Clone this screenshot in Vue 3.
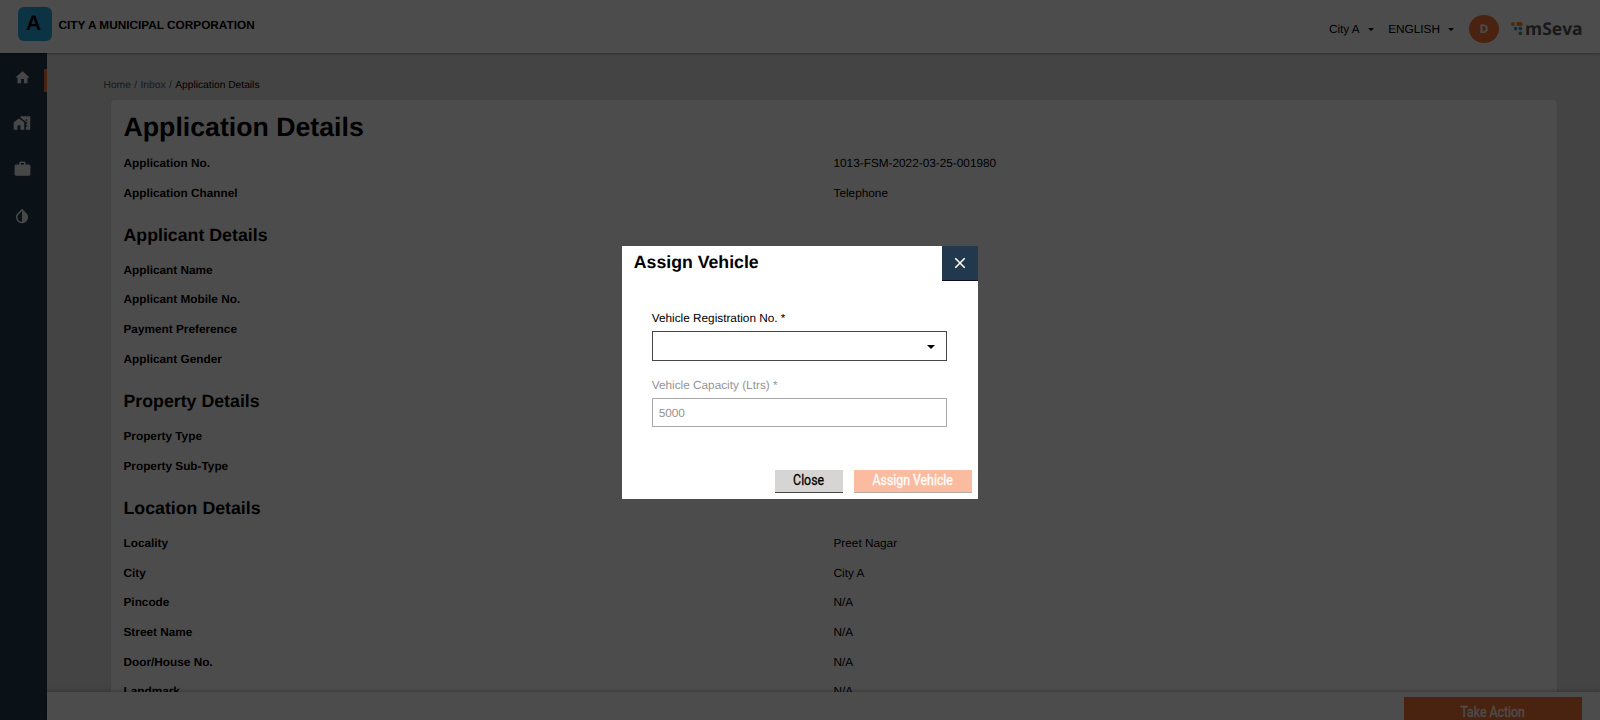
<script setup>
const sections = [
  { title: '', rows: [['Application No.', '1013-FSM-2022-03-25-001980'], ['Application Channel', 'Telephone']] },
  { title: 'Applicant Details', rows: [['Applicant Name', ''], ['Applicant Mobile No.', ''], ['Payment Preference', ''], ['Applicant Gender', '']] },
  { title: 'Property Details', rows: [['Property Type', ''], ['Property Sub-Type', '']] },
  { title: 'Location Details', rows: [['Locality', 'Preet Nagar'], ['City', 'City A'], ['Pincode', 'N/A'], ['Street Name', 'N/A'], ['Door/House No.', 'N/A'], ['Landmark', 'N/A']] }
]
</script>

<template>
  <div class="page">
    <header class="top">
      <div class="logo">A</div>
      <div class="corp">CITY A MUNICIPAL CORPORATION</div>
      <div class="tools">
        <span class="city">City A</span><i class="caret"></i>
        <span class="lang">ENGLISH</span><i class="caret"></i>
        <div class="avatar">D</div>
        <svg class="dots" width="12" height="14" viewBox="0 0 12 14">
          <g fill="#f58a1f"><circle cx="2" cy="2" r="1.9" /><rect x="5.400" y=".1" width="6.200" height="3.800" rx="1.600" /></g>
          <g fill="#1f8fe0"><circle cx="4.600" cy="6.600" r="1.800" /><circle cx="9.400" cy="6.600" r="1.800" /></g>
          <circle cx="9.400" cy="11.400" r="1.800" fill="#2faa4a" />
        </svg>
        <span class="brand">mSeva</span>
      </div>
    </header>
    <div class="body">
      <nav class="side">
        <div class="item active"><svg width="17" height="17" viewBox="0 0 24 24"><path d="M10 20v-6h4v6h5v-8h3L12 3 2 12h3v8z" /></svg></div>
        <div class="item"><svg width="18" height="18" viewBox="0 0 24 24"><path d="M1 11v10h5v-6h4v6h5V11L8 6z" /><path d="M10 3v1.970l7 5V11h2v2h-2v2h2v2h-2v4h6V3H10zm9 6h-2V7h2v2z" /></svg></div>
        <div class="item"><svg width="19" height="18" viewBox="0 0 24 24" preserveAspectRatio="none"><path d="M20 6h-4V4c0-1.100-.9-2-2-2h-4c-1.100 0-2 .9-2 2v2H4c-1.100 0-2 .9-2 2v11c0 1.100.9 2 2 2h16c1.100 0 2-.9 2-2V8c0-1.100-.9-2-2-2zm-6 0h-4V4h4v2z" /></svg></div>
        <div class="item drop"><svg width="18" height="18" viewBox="0 0 24 24"><path d="M17.660 8 12 2.350 6.340 8C4.780 9.560 4 11.640 4 13.640s.78 4.110 2.340 5.670S9.950 21.640 12 21.640s4.100-.77 5.660-2.330S20 15.640 20 13.640 19.220 9.560 17.660 8zM6 14c.01-2 .62-3.270 1.760-4.400L12 5.270v14.400c-3.300 0-6-2.700-6-5.670z" /></svg></div>
      </nav>
      <main class="main">
        <div class="crumbs"><span>Home</span><b>/</b><span>Inbox</span><b>/</b><span class="here">Application Details</span></div>
        <section class="card">
          <h1>Application Details</h1>
          <template v-for="s in sections" :key="s.title">
            <h2 v-if="s.title">{{ s.title }}</h2>
            <div v-for="r in s.rows" :key="r[0]" class="row"><strong>{{ r[0] }}</strong><span>{{ r[1] }}</span></div>
          </template>
        </section>
      </main>
    </div>
    <footer class="foot"><button class="take"><span class="cond">Take Action</span></button></footer>
    <div class="overlay">
      <div class="modal">
        <div class="mhead">
          <h3>Assign Vehicle</h3>
          <button class="x"><svg width="12" height="12" viewBox="0 0 12 12"><path d="M1.300 1.300 10.700 10.700M10.700 1.300 1.300 10.700" stroke="#fff" stroke-width="1.600" /></svg></button>
        </div>
        <div class="fields">
          <label>Vehicle Registration No. *</label>
          <div class="input select"><i class="caret big"></i></div>
          <label class="off second">Vehicle Capacity (Ltrs) *</label>
          <div class="input off">5000</div>
        </div>
        <div class="actions">
          <button class="btn close"><span class="cond">Close</span></button>
          <button class="btn assign"><span class="cond">Assign Vehicle</span></button>
        </div>
      </div>
    </div>
  </div>
</template>

<style>
body { overflow: hidden; }
</style>
<style scoped>
* { box-sizing: border-box; }
.page { position: relative; width: 1600px; height: 720px; overflow: hidden; display: flex; flex-direction: column; background: #e3e3e3; font: 11.800px/14px "Liberation Sans", Arial, sans-serif; color: #000; text-rendering: geometricPrecision; }
button { border: 0; padding: 0; font: inherit; }
h1, h2, h3 { margin: 0; }
.top { position: relative; z-index: 2; height: 53px; flex: none; display: flex; align-items: flex-start; padding: 7px 18px 0; background: #fff; box-shadow: 0 1px 2px rgba(0,0,0,.3); }
.logo { width: 34px; height: 34px; border-radius: 6px; background: #29abe2; font: bold 21px/33px "Liberation Sans", Arial, sans-serif; text-align: center; padding-right: 3px; }
.corp { font-weight: bold; margin: 11px 0 0 6.500px; }
.tools { margin-left: auto; height: 43px; display: flex; align-items: center; }
.caret { width: 0; height: 0; border: 3px solid transparent; border-top: 3px solid #000; border-bottom: 0; }
.tools .caret { margin-top: 2px; }
.city { margin-right: 8px; padding-top: 1px; }
.lang { margin: 0 8px 0 14.500px; padding-top: 1px; }
.avatar { margin-left: 15px; width: 30px; height: 28px; border-radius: 50%; background: #f47738; color: #fff; text-align: center; font: bold 12px/28px "Open Sans", sans-serif; }
.dots { margin-left: 12px; }
.brand { margin-left: 2px; width: 57px; font: bold 17.500px/24px "Open Sans", sans-serif; color: #555; }
.body { flex: 1; min-height: 0; display: flex; }
.side { width: 47px; flex: none; background: #22394d; }
.item { height: 45.500px; padding-left: 13.200px; display: flex; align-items: center; }
.item svg { fill: #eee; }
.item.active { height: 23px; padding: 0 0 5px 13.800px; margin: 15.500px 0 9px; border-right: 3px solid #f47738; }
.drop { height: 48px; }
.main { flex: 1; padding: 26px 43.500px 0 56.500px; min-width: 0; }
.crumbs { display: flex; height: 14px; font-size: 10.250px; line-height: 14px; color: #505a5f; margin-bottom: 7px; }
.crumbs b { font-weight: normal; margin: 0 3.400px; }
.here { color: #000; }
.card { margin-left: 7.500px; height: 700px; padding: 11px 12.500px; border-radius: 4px; background: #fff; box-shadow: 0 1px 2px rgba(0,0,0,.16); }
h1 { font-size: 26.700px; line-height: 32px; margin-bottom: 5px; }
h2 { height: 47.500px; padding-top: 8.500px; font-size: 17.750px; line-height: 39.500px; }
.row { height: 29.700px; display: grid; grid-template-columns: 710px 1fr; align-items: center; }
.foot { position: absolute; left: 47px; right: 0; bottom: 0; height: 28px; overflow: visible; background: #fff; box-shadow: 0 -1px 4px rgba(0,0,0,.25); padding: 5px 18px 0; display: flex; justify-content: flex-end; align-items: flex-start; }
.take { width: 178px; height: 30px; background: #f47738; color: #fff; }
.cond { display: inline-block; font: 400 14px/18px Roboto, sans-serif; -webkit-text-stroke: .3px currentColor; transform: scaleX(.88); white-space: nowrap; }
.overlay { position: absolute; inset: 0; z-index: 5; background: rgba(0,0,0,.7); display: flex; align-items: flex-start; justify-content: center; padding: 245.500px 1px 0 0; }
.modal { width: 356px; height: 253px; background: #fff; display: flex; flex-direction: column; }
.mhead { display: flex; justify-content: space-between; padding-left: 12.300px; height: 35.500px; }
.mhead h3 { font-size: 17.700px; line-height: 32px; }
.x { width: 36px; height: 35.500px; background: #22394d; border-bottom: 1px solid #0b0c28; display: grid; place-items: center; }
.fields { padding: 28.500px 30.200px 0; }
.fields label { display: block; line-height: 16px; margin-bottom: 5px; }
.input { height: 30px; border: 1px solid #464646; padding: 0 6px; line-height: 28px; }
.input.off { border-color: #aaa; height: 29px; }
.off { color: #949494; }
.fields .second { margin-top: 16.700px; }
.select { display: flex; align-items: center; justify-content: flex-end; padding: 3px 11px 0; }
.big { border-width: 3.500px 4px 0; border-top-width: 4px; }
.actions { margin-top: auto; padding: 0 5.500px 5.500px; display: flex; justify-content: flex-end; gap: 11px; }
.btn { height: 23.500px; padding-bottom: 1px; }
.close { width: 68px; background: #d6d5d4; border-bottom: 1px solid #464646; }
.assign { width: 118px; background: #fbbba0; color: #fff; border-bottom: 1px solid #b5aca8; }
</style>
